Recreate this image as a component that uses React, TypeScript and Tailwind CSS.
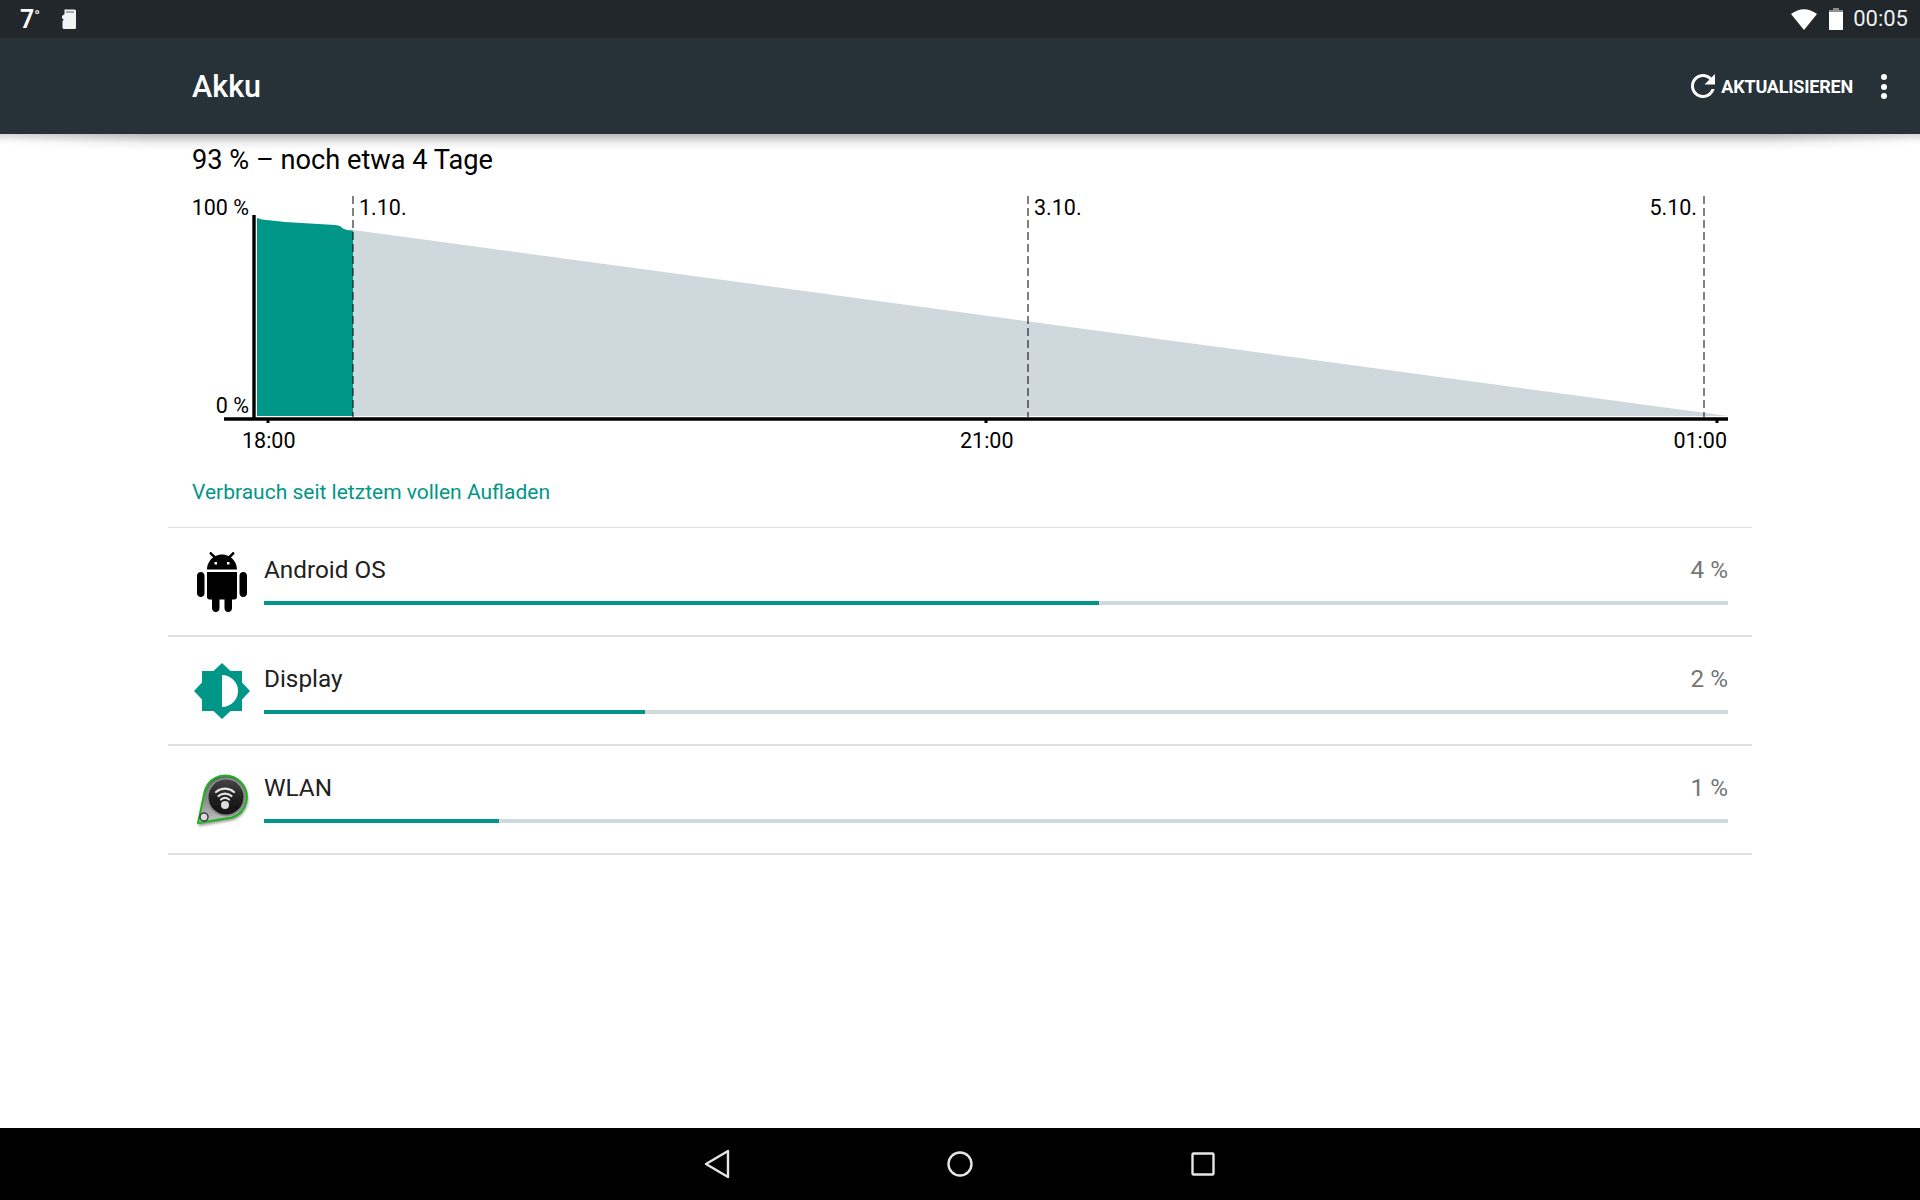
const ROWS = [
  { name: 'Android OS', pct: '4 %', fill: 835 },
  { name: 'Display', pct: '2 %', fill: 381 },
  { name: 'WLAN', pct: '1 %', fill: 235 },
];

function AndroidIcon() {
  return (
    <svg viewBox="0 0 24 24" className="w-[60px] h-[60px]" fill="#000">
      <path d="M6 18c0 .55.45 1 1 1h1v3.5c0 .83.67 1.5 1.5 1.5s1.5-.67 1.5-1.5V19h2v3.5c0 .83.67 1.5 1.5 1.5s1.5-.67 1.5-1.5V19h1c.55 0 1-.45 1-1V8H6v10zM3.5 8C2.67 8 2 8.67 2 9.5v7c0 .83.67 1.5 1.5 1.5S5 17.33 5 16.5v-7C5 8.67 4.33 8 3.5 8zm17 0c-.83 0-1.5.67-1.5 1.5v7c0 .83.67 1.5 1.5 1.5s1.5-.67 1.5-1.5v-7c0-.83-.67-1.5-1.5-1.5zm-4.97-5.84l1.3-1.3c.2-.2.2-.51 0-.71-.2-.2-.51-.2-.71 0l-1.48 1.48C13.85 1.23 12.95 1 12 1c-.96 0-1.86.23-2.66.63L7.85.15c-.2-.2-.51-.2-.71 0-.2.2-.2.51 0 .71l1.31 1.31C6.97 3.26 6 5.01 6 7h12c0-1.99-.97-3.75-2.47-4.84zM10 5H9V4h1v1zm5 0h-1V4h1v1z" />
    </svg>
  );
}

function DisplayIcon() {
  return (
    <svg viewBox="0 0 60 60" className="w-[60px] h-[60px]">
      <polygon fill="#009688" points="30,2 38.5,10 50,10 50,21.5 58,30 50,38.5 50,50 38.5,50 30,58 21.5,50 10,50 10,38.5 2,30 10,21.5 10,10 21.5,10" />
      <path fill="#fff" d="M30 14 A16 16 0 0 1 30 46 Z" />
    </svg>
  );
}

function WlanIcon() {
  return (
    <svg viewBox="7 5 60 60" className="w-[60px] h-[60px]">
      <defs>
        <linearGradient id="wlanBody" x1="0" y1="0" x2="0" y2="1">
          <stop offset="0" stopColor="#444" />
          <stop offset="0.5" stopColor="#222" />
          <stop offset="1" stopColor="#111" />
        </linearGradient>
        <linearGradient id="wlanShell" x1="0" y1="0" x2="0" y2="1">
          <stop offset="0" stopColor="#555" />
          <stop offset="1" stopColor="#c4c4c4" />
        </linearGradient>
        <filter id="wlanBlur" x="-20%" y="-20%" width="140%" height="140%">
          <feGaussianBlur stdDeviation="1.6" />
        </filter>
        <filter id="wlanSoft" x="-10%" y="-10%" width="120%" height="120%">
          <feGaussianBlur stdDeviation="0.45" />
        </filter>
      </defs>
      <path d="M13 61 L20 27 A22 22 0 1 1 48 55 Z" fill="#000" opacity="0.45" filter="url(#wlanBlur)" />
      <g filter="url(#wlanSoft)">
        <path d="M13 58 L20 25 A21.5 21.5 0 1 1 47 52.5 Z" fill="url(#wlanShell)" stroke="#1fb51f" strokeWidth="2" strokeLinejoin="round" />
        <circle cx="41" cy="32" r="19.5" fill="#8a8a8a" />
        <circle cx="41" cy="32" r="17.5" fill="url(#wlanBody)" />
        <circle cx="19" cy="52" r="4" fill="#dcdcdc" stroke="#444" strokeWidth="1.6" />
        <g fill="none" stroke="#e4e4e4" strokeWidth="2.2" strokeLinecap="round">
          <path d="M31 27 A14 14 0 0 1 49 27" />
          <path d="M33.5 31 A10 10 0 0 1 46.5 31" />
          <path d="M36 34.5 A6.5 6.5 0 0 1 44 34.5" />
        </g>
        <circle cx="40" cy="40" r="4" fill="#dcdcdc" />
      </g>
    </svg>
  );
}

function BatteryChart() {
  return (
    <svg viewBox="168 186 1584 274" className="absolute inset-0 w-[1584px] h-[274px]">
      <polygon fill="#009688" points="257,218 262,219.5 285,222 335,225 340,226 343,228.5 347,230 353,230.5 353,416 257,416" />
      <polygon fill="#cfd8dc" points="353,230 1728,416 353,416" />
      <g stroke="#000" strokeWidth="3.4" fill="none">
        <line x1="254" y1="215" x2="254" y2="420" />
        <line x1="224" y1="419" x2="1728" y2="419" />
      </g>
      <g stroke="#000" strokeWidth="3" fill="none">
        <line x1="268" y1="420" x2="268" y2="423" />
        <line x1="986" y1="420" x2="986" y2="423" />
        <line x1="1717" y1="420" x2="1717" y2="423" />
      </g>
      <g stroke="#000" strokeOpacity="0.5" strokeWidth="2" strokeDasharray="8 4" fill="none">
        <line x1="353" y1="196" x2="353" y2="417" />
        <line x1="1028" y1="196" x2="1028" y2="417" />
        <line x1="1704" y1="196" x2="1704" y2="417" />
      </g>
    </svg>
  );
}

export default function App() {
  return (
    <div className="flex flex-col w-[1920px] h-[1200px] bg-white overflow-hidden [font-family:Roboto,sans-serif] text-[#212121]">
      {/* Status bar */}
      <div className="flex items-center h-[38px] bg-[#21272b] text-white shrink-0">
        <span className="ml-[20px] text-[25px] font-semibold leading-none">7<span className="relative -top-[7px] text-[15px]">°</span></span>
        <svg viewBox="0 0 14 20" className="ml-[22px] w-[14px] h-[20px]" fill="#f2f2f2">
          <path d="M2.5 0.5 H12.5 Q14 0.5 14 2 V18.5 Q14 20 12.5 20 H2 Q0.5 20 0.5 18.5 V12 L1.5 11 V10 L0 9.5 V7 L2.5 5 Z" />
          <rect x="4" y="2" width="8" height="2" fill="#a8a8a8" />
        </svg>
        <svg viewBox="0 0 26 21" className="ml-auto w-[26px] h-[21px]" fill="#fff">
          <path d="M13 21 L0 5 Q13 -4.5 26 5 Z" />
        </svg>
        <svg viewBox="0 0 14 22" className="ml-[12px] w-[14px] h-[22px]">
          <path fill="#8e8e8e" d="M4 0 H10 V2 H14 V4 H0 V2 H4 Z" />
          <rect x="0" y="4" width="14" height="18" fill="#fff" />
        </svg>
        <span className="ml-[10px] mr-[12px] text-[22px] leading-none text-white/95">00:05</span>
      </div>

      {/* Action bar */}
      <div className="relative z-10 flex items-center h-[96px] bg-[#263238] text-white shrink-0">
        <h1 className="ml-[192px] mt-[2px] text-[30.5px] font-medium leading-none">Akku</h1>
        <svg viewBox="0 0 24 24" className="ml-auto w-9 h-9" fill="#fff">
          <path d="M17.65 6.35C16.2 4.9 14.21 4 12 4c-4.42 0-7.99 3.58-7.99 8s3.57 8 7.99 8c3.73 0 6.84-2.55 7.73-6h-2.08c-.82 2.33-3.04 4-5.65 4-3.31 0-6-2.69-6-6s2.69-6 6-6c1.66 0 3.14.69 4.22 1.78L13 11h7V4l-2.35 2.35z" />
        </svg>
        <span className="mt-[2px] text-[18px] font-bold leading-none tracking-[-0.2px]">AKTUALISIEREN</span>
        <div className="ml-[28px] mr-[33px] mt-[1px] flex flex-col gap-[3.5px]">
          <span className="w-[6px] h-[6px] rounded-full bg-white" />
          <span className="w-[6px] h-[6px] rounded-full bg-white" />
          <span className="w-[6px] h-[6px] rounded-full bg-white" />
        </div>
        {/* Tapered shadow under the bar */}
        <div className="absolute inset-x-0 top-full h-[9px] bg-gradient-to-b from-black/15 to-transparent" />
        <div className="absolute inset-x-0 top-full h-[16px] bg-gradient-to-b from-black/15 to-transparent [mask-image:linear-gradient(90deg,transparent,black_8%,black_92%,transparent)]" />
      </div>

      {/* Content */}
      <main className="flex-1 px-[168px]">
        <div className="flex items-center h-[52px] px-6 text-[27.2px] text-black">93 % – noch etwa 4 Tage</div>

        <div className="relative h-[274px] text-[21.5px] leading-none text-black">
          <BatteryChart />
          <span className="absolute right-[1503px] top-[11px]">100 %</span>
          <span className="absolute right-[1503px] top-[209px]">0 %</span>
          <span className="absolute left-[191px] top-[11px]">1.10.</span>
          <span className="absolute left-[866px] top-[11px]">3.10.</span>
          <span className="absolute right-[55px] top-[11px]">5.10.</span>
          <span className="absolute left-[74px] top-[244px]">18:00</span>
          <span className="absolute left-[792px] top-[244px]">21:00</span>
          <span className="absolute right-[25px] top-[244px]">01:00</span>
        </div>

        <div className="h-[67px] px-6 pt-[20px] text-[21px] leading-[24px] text-[#009688]">Verbrauch seit letztem vollen Aufladen</div>

        <div className="border-t border-[#e0e0e0]">
          {ROWS.map((r, i) => (
            <div key={r.name} className="flex items-center h-[109px] pl-6 pr-6 border-b-2 border-[#e0e0e0]">
              <div className="w-[72px] shrink-0">
                {i === 0 && <AndroidIcon />}
                {i === 1 && <DisplayIcon />}
                {i === 2 && <WlanIcon />}
              </div>
              <div className="flex-1 self-stretch pt-[28px]">
                <div className="flex justify-between text-[24.3px] leading-[28px]">
                  <span>{r.name}</span>
                  <span className="text-[#757575]">{r.pct}</span>
                </div>
                <div className="mt-[17px] h-1 bg-[#cfd8dc]">
                  <div className="h-full bg-[#009688]" style={{ width: r.fill }} />
                </div>
              </div>
            </div>
          ))}
        </div>
      </main>

      {/* Navigation bar */}
      <div className="flex items-center justify-center gap-[211px] h-[72px] bg-black shrink-0">
        <svg viewBox="0 0 32 32" className="w-8 h-8" fill="none" stroke="#e6e6e6" strokeWidth="2.4" strokeLinejoin="round">
          <path d="M27 3 V29 L5 16 Z" />
        </svg>
        <svg viewBox="0 0 32 32" className="w-8 h-8" fill="none" stroke="#e6e6e6" strokeWidth="2.4">
          <circle cx="16" cy="16" r="11.5" />
        </svg>
        <svg viewBox="0 0 32 32" className="w-8 h-8" fill="none" stroke="#e6e6e6" strokeWidth="2.4" strokeLinejoin="round">
          <rect x="5.5" y="5.5" width="21" height="21" rx="1" />
        </svg>
      </div>
    </div>
  );
}
